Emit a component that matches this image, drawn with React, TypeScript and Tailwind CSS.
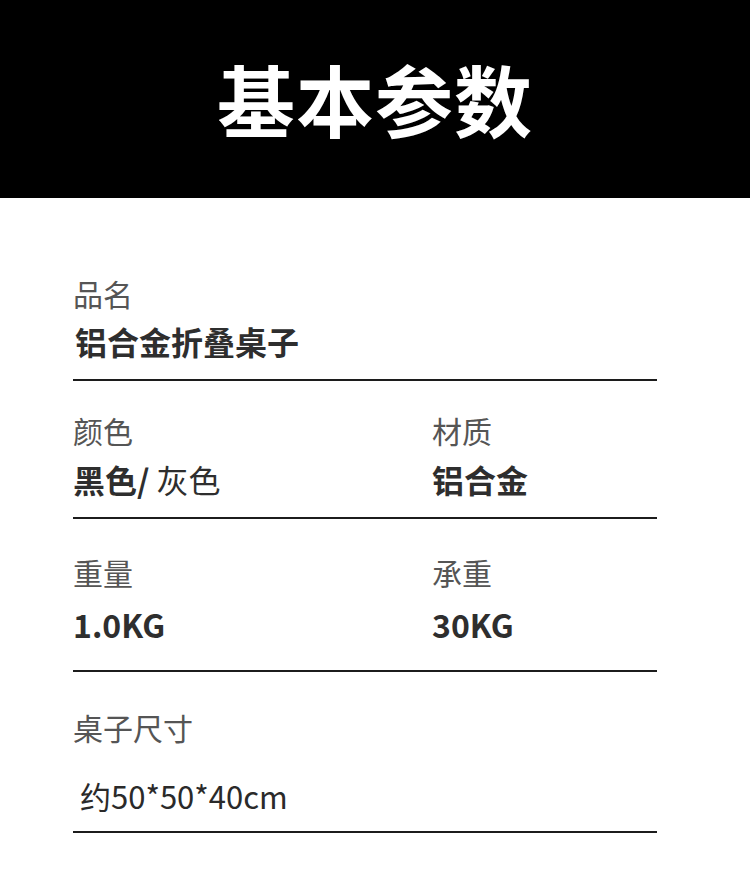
import React from "react";

const font = { fontFamily: '"Noto Sans CJK SC", "Noto Sans", sans-serif' };

function Label({ children }: { children: React.ReactNode }) {
  return <div className="text-[30px] leading-[36px] text-[#555555]">{children}</div>;
}

function Value({ children }: { children: React.ReactNode }) {
  return <div className="text-[32px] leading-[38px] font-bold text-[#2e2e2e]">{children}</div>;
}

export default function App() {
  return (
    <div className="w-[750px] h-[883px] bg-white" style={font}>
      <div className="h-[198px] bg-black flex items-center justify-center">
        <h1 className="text-[78px] leading-none font-bold text-white tracking-[1px] pb-[2px]">基本参数</h1>
      </div>
      <div className="ml-[73px] w-[584px]">
        <div className="pt-[77px] pb-[19px] border-b-2 border-[#1c1c1c]">
          <Label>品名</Label>
          <div className="mt-[11px] pl-[2px]">
            <Value>铝合金折叠桌子</Value>
          </div>
        </div>
        <div className="pt-[31px] pb-[19px] border-b-2 border-[#1c1c1c] flex">
          <div className="w-[359px]">
            <Label>颜色</Label>
            <div className="mt-[12px]">
              <Value>
                黑色/<span className="font-normal"> 灰色</span>
              </Value>
            </div>
          </div>
          <div>
            <Label>材质</Label>
            <div className="mt-[12px]">
              <Value>铝合金</Value>
            </div>
          </div>
        </div>
        <div className="pt-[35px] pb-[27px] border-b-2 border-[#1c1c1c] flex">
          <div className="w-[359px]">
            <Label>重量</Label>
            <div className="mt-[15px]">
              <Value>1.0KG</Value>
            </div>
          </div>
          <div>
            <Label>承重</Label>
            <div className="mt-[15px]">
              <Value>30KG</Value>
            </div>
          </div>
        </div>
        <div className="pt-[37px] pb-[16px] border-b-2 border-[#1c1c1c]">
          <Label>桌子尺寸</Label>
          <div className="mt-[32px] pl-[7px] text-[31px] leading-[38px] text-[#2a2a2a]">约50*50*40cm</div>
        </div>
      </div>
    </div>
  );
}
